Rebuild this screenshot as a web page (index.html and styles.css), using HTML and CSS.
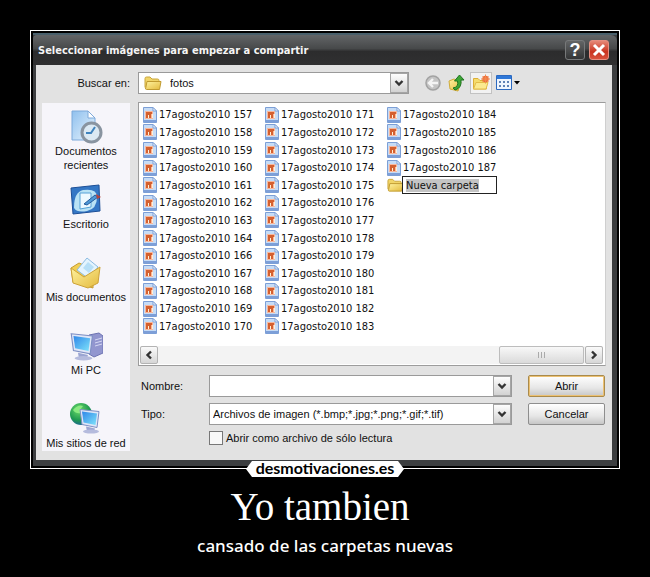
FILE: index.html
```html
<!DOCTYPE html>
<html lang="es">
<head>
<meta charset="utf-8">
<title>Yo tambien</title>
<link rel="stylesheet" href="styles.css">
</head>
<body>

<!-- Shared icons -->
<svg class="sprite" width="0" height="0" aria-hidden="true">
  <defs>
    <linearGradient id="gFolder" x1="0" y1="0" x2="1" y2="1">
      <stop offset="0" stop-color="#fff3a0"/><stop offset="1" stop-color="#e3b93c"/>
    </linearGradient>
    <linearGradient id="gScreen" x1="0" y1="0" x2="1" y2="1">
      <stop offset="0" stop-color="#2f86e8"/><stop offset="1" stop-color="#7fe4fb"/>
    </linearGradient>
    <linearGradient id="gPage" x1="0" y1="0" x2="1" y2="1">
      <stop offset="0" stop-color="#8fc0ee"/><stop offset="1" stop-color="#e8f4fd"/>
    </linearGradient>
    <radialGradient id="gGlobe" cx="0.4" cy="0.3" r="0.8">
      <stop offset="0" stop-color="#6fdc6a"/><stop offset="0.6" stop-color="#1f9a50"/><stop offset="1" stop-color="#1c55a8"/>
    </radialGradient>
  </defs>
  <symbol id="folder" viewBox="0 0 18 16">
    <path d="M1 12.500V3.500Q1 2 2.500 2H6L8 4H13.500Q15 4 15 5.500V7" fill="#f1d568" stroke="#c9a63c"/>
    <path d="M1.500 14L3 6.500H17L15.500 14.500H2.500Z" fill="url(#gFolder)" stroke="#c09a30"/>
  </symbol>
  <symbol id="image" viewBox="0 0 14 16">
    <path d="M.5.500H10L13.500 4V15.500H.5Z" fill="#c6dcf6" stroke="#7c9fd6"/>
    <path d="M10 .5V4H13.500Z" fill="#fff" stroke="#7c9fd6"/>
    <path d="M2 4H10V12H2Z" fill="#f7b79c"/>
    <path d="M3 5H9V7H8V11H6V8H5V11H3Z" fill="#d4602f"/>
    <path d="M5 8H6V11H5ZM9 7H10V11H9Z" fill="#fff0d8"/>
    <path d="M1 14H13" stroke="#7d9fd8" stroke-width="2"/>
  </symbol>
  <symbol id="chevron" viewBox="0 0 10 8">
    <path d="M1.500 2L5 5.500L8.500 2" fill="none" stroke="#333" stroke-width="2.400"/>
  </symbol>
  <symbol id="monitor" viewBox="0 0 26 26">
    <path d="M8 19L17 21L16 24L9 24Z" fill="#9ba5d2"/>
    <ellipse cx="13" cy="24" rx="8" ry="2" fill="#b5bbdd"/>
    <path d="M2 2L21 4L19 20L4 17Z" fill="#dfe6f7" stroke="#7e8fc4"/>
    <path d="M4 4L19 6L17.500 17.500L5.500 15Z" fill="url(#gScreen)"/>
  </symbol>
</svg>

<main class="poster">
  <div class="frame">
    <section class="dialog">
      <header class="titlebar">
        <h2 class="titlebar-text">Seleccionar imágenes para empezar a compartir</h2>
        <button class="title-btn" aria-label="Ayuda">?</button>
        <button class="title-btn close" aria-label="Cerrar">
          <svg width="14" height="14" viewBox="0 0 14 14"><path d="M2 2L12 12M12 2L2 12" stroke="#fff" stroke-width="3"/></svg>
        </button>
      </header>

      <div class="content">
        <div class="lookin">
          <label class="lookin-label" for="lookin">Buscar en:</label>
          <div class="combo combo-folder">
            <svg class="combo-icon" width="18" height="16"><use href="#folder"/></svg>
            <select id="lookin"><option>fotos</option></select>
            <span class="combo-arrow"><svg width="10" height="8"><use href="#chevron"/></svg></span>
          </div>
          <div class="tools">
            <button class="tool" aria-label="Atrás">
              <svg width="18" height="18" viewBox="0 0 18 18"><circle cx="9" cy="9" r="7" fill="#c4c4c4" stroke="#a2a2a2" stroke-width="1.500"/><path d="M14 9H6M9 5L5 9L9 13" fill="none" stroke="#f4f4f4" stroke-width="2.400"/></svg>
            </button>
            <button class="tool" aria-label="Subir un nivel">
              <svg width="18" height="18" viewBox="0 0 18 18"><path d="M1 7L6 5L13 8L10 17L2 15Z" fill="url(#gFolder)" stroke="#cfab3a"/><path d="M5 14Q11 13 9.500 7H6.500L11.500 1L16 6H13Q14 14 7 16Z" fill="#3da536" stroke="#1f7420"/></svg>
            </button>
            <button class="tool hot" aria-label="Crear nueva carpeta">
              <svg width="18" height="18" viewBox="0 0 18 18"><path d="M1.500 15V4.500H6L8 6.500H14.500V15Z" fill="#f5dc6c" stroke="#dcae37"/><path d="M1.500 15L4 8.500H16L14 15Z" fill="#fbea8f" stroke="#e3bc49"/><circle cx="13.500" cy="5" r="3.200" fill="#ef6a3a"/><path d="M13.500 0.500V9.500M9 5H18M10.500 2L16.500 8M16.500 2L10.500 8" stroke="#f08a50"/></svg>
            </button>
            <button class="tool wide" aria-label="Ver">
              <svg width="24" height="18" viewBox="0 0 24 18"><path d="M.5 1.500H15.500V15.500H.5Z" fill="#eef5fe" stroke="#2b69c0"/><path d="M1 2H15V5H1Z" fill="#2f78d8"/><path d="M3 7H5V9H3ZM7 7H9V9H7ZM11 7H13V9H11ZM3 11H5V13H3ZM7 11H9V13H7ZM11 11H13V13H11Z" fill="#5e82b6"/><path d="M18 7H24L21 10.500Z" fill="#000"/></svg>
            </button>
          </div>
        </div>

        <div class="columns">
          <nav class="places">
            <a class="place" href="#">
              <svg width="34" height="34" viewBox="0 0 34 34"><path d="M3 1H19L26 8V30H3Z" fill="url(#gPage)" stroke="#7da9da"/><path d="M19 1V8H26Z" fill="#fff" stroke="#7da9da"/><circle cx="22.500" cy="22.500" r="9.500" fill="#dbe9f3" stroke="#8994a0" stroke-width="3"/><path d="M26 17L22 23H17" fill="none" stroke="#3f83bd" stroke-width="2"/></svg>
              <span>Documentos recientes</span>
            </a>
            <a class="place" href="#">
              <svg width="34" height="34" viewBox="0 0 34 34"><path d="M2 5L30 2L31 28L4 31Z" fill="#3477c5" stroke="#1d4f97"/><path d="M5 25Q5 9 14 7Q28 5 28 14Q28 26 18 28Q8 30 5 25Z" fill="#b9e2f5"/><path d="M11 10H22V24L11 26Z" fill="#eef9ff" stroke="#57a2d7"/><path d="M15 21L26 12L29 14L18 22Z" fill="#4d97d6" stroke="#265c9d"/><path d="M27 11L32 14L28 16Z" fill="#b2433e"/></svg>
              <span>Escritorio</span>
            </a>
            <a class="place" href="#">
              <svg width="34" height="34" viewBox="0 0 34 34"><path d="M2 12L10 7L24 13L24 32L4 26Z" fill="#f1ce55" stroke="#c69c31"/><path d="M8 14L18 2L29 11L20 23Z" fill="#e4f4fe" stroke="#8bbbe2"/><path d="M14 12L19 6L25 11L20 17Z" fill="#b6dff7"/><path d="M2 12L15 21L31 11L29 27L19 32L4 27Z" fill="url(#gFolder)" stroke="#cda339"/></svg>
              <span>Mis documentos</span>
            </a>
            <a class="place" href="#">
              <svg width="34" height="34" viewBox="0 0 34 34"><path d="M20 6L30 4L34 7V24L25 28L20 25Z" fill="#9296cf" stroke="#6e74b2"/><path d="M26 11L33 9M26 14L33 12M26 17L33 15" stroke="#d5d8f3"/><use href="#monitor" x="0" y="2" width="29" height="30"/></svg>
              <span>Mi PC</span>
            </a>
            <a class="place" href="#">
              <svg width="34" height="34" viewBox="0 0 34 34"><circle cx="12" cy="12" r="11" fill="url(#gGlobe)"/><path d="M4 8Q9 2 14 4Q10 8 12 11Q7 12 4 8Z" fill="#8aea80"/><use href="#monitor" x="9" y="3" width="26" height="31"/></svg>
              <span>Mis sitios de red</span>
            </a>
          </nav>

          <div class="main">
            <div class="listbox">
              <ul class="files" id="files"></ul>
              <div class="scrollbar">
                <button class="scroll-btn" aria-label="Izquierda"><svg class="left" width="10" height="8"><use href="#chevron"/></svg></button>
                <div class="scroll-thumb"><i></i><i></i><i></i></div>
                <button class="scroll-btn" aria-label="Derecha"><svg class="right" width="10" height="8"><use href="#chevron"/></svg></button>
              </div>
            </div>

            <form class="fields">
              <label for="name">Nombre:</label>
              <div class="combo">
                <input id="name" type="text">
                <span class="combo-arrow"><svg width="10" height="8"><use href="#chevron"/></svg></span>
              </div>
              <button class="btn default" type="button">Abrir</button>

              <label for="type">Tipo:</label>
              <div class="combo">
                <select id="type"><option>Archivos de imagen (*.bmp;*.jpg;*.png;*.gif;*.tif)</option></select>
                <span class="combo-arrow"><svg width="10" height="8"><use href="#chevron"/></svg></span>
              </div>
              <button class="btn" type="button">Cancelar</button>

              <div class="readonly">
                <input id="readonly" type="checkbox">
                <label for="readonly">Abrir como archivo de sólo lectura</label>
              </div>
            </form>
          </div>
        </div>
      </div>
    </section>
    <a class="brand" href="#">desmotivaciones.es</a>
  </div>

  <h1 class="title">Yo tambien</h1>
  <p class="subtitle">cansado de las carpetas nuevas</p>
</main>

<script src="script.js"></script>
</body>
</html>
```

FILE: styles.css
```css
* {
  box-sizing: border-box;
}

body {
  margin: 0;
  background: #000;
  color: #111;
  font-family: "Liberation Sans", Arial, sans-serif;
  font-size: 11px;
}

button, input, select {
  font: inherit;
  color: inherit;
  margin: 0;
  padding: 0;
}

svg {
  display: block;
  flex: none;
}

.sprite {
  position: absolute;
}

.poster {
  padding: 30px 30px 0;
}

.frame {
  position: relative;
  border: 1px solid #fff;
  padding: 2px;
}

/* Dialog window */
.dialog {
  background: #3c3e40;
  padding: 0 5px 6px 3px;
  border-top: 2px solid #49606c;
}

.titlebar {
  display: flex;
  align-items: center;
  gap: 4px;
  height: 30px;
  margin: 0 -5px 0 -3px;
  padding: 0 8px 0 3px;
  background: linear-gradient(#636567, #47494a 45%, #2c2c2d 55%, #303031);
  border-radius: 4px 6px 0 0;
}

.titlebar-text {
  flex: 1;
  margin: 0;
  padding-left: 2px;
  color: #f4f4f4;
  font-family: "DejaVu Sans Condensed", "DejaVu Sans", sans-serif;
  font-size: 11px;
  font-weight: bold;
}

.title-btn {
  display: flex;
  align-items: center;
  justify-content: center;
  width: 20px;
  height: 20px;
  border: 1px solid #77797a;
  border-radius: 3px;
  background: linear-gradient(#636566, #343536);
  color: #fff;
  font-size: 18px;
  font-weight: bold;
  line-height: 18px;
}

.title-btn.close {
  border-color: #e68e80;
  background: linear-gradient(#e58877, #c9331f 60%, #d9523d);
}

.content {
  padding: 7px 6px 9px;
  background: #e2e2e2;
}

/* Look in row */
.lookin {
  display: flex;
  align-items: center;
  height: 22px;
}

.lookin-label {
  width: 96px;
  padding-right: 8px;
  text-align: right;
}

.combo {
  position: relative;
  display: flex;
  align-items: center;
  height: 22px;
  border: 1px solid #9a9a9a;
  background: #fff;
}

.combo-folder {
  flex: 0 1 271px;
  padding-left: 5px;
}

.combo select,
.combo input {
  flex: 1;
  min-width: 0;
  height: 20px;
  padding: 0 20px 0 3px;
  border: 0;
  outline: 0;
  background: none;
  appearance: none;
}

.combo-folder select {
  padding-left: 8px;
}

.combo-arrow {
  position: absolute;
  top: 0;
  right: 0;
  bottom: 0;
  display: flex;
  align-items: center;
  justify-content: center;
  width: 18px;
  border: 1px solid #a5a5a5;
  background: linear-gradient(#fdfdfd, #d2d2d2);
  pointer-events: none;
}

.tools {
  display: flex;
  align-items: center;
  gap: 2px;
  padding-left: 13px;
}

.tool {
  display: flex;
  align-items: center;
  justify-content: center;
  width: 22px;
  height: 22px;
  border: 1px solid transparent;
  background: none;
}

.tool.hot {
  border-color: #c2c2c2;
  background: #f2f2f2;
}

.tool.wide {
  width: 28px;
}

.columns {
  display: flex;
  gap: 8px;
  padding-top: 8px;
}

/* Places bar */
.places {
  width: 88px;
  margin-top: 1px;
  padding: 7px 0 1px;
  background: #f6f5fa;
}

.place {
  display: flex;
  flex-direction: column;
  align-items: center;
  min-height: 73px;
  color: #111;
  line-height: 14px;
  text-align: center;
  text-decoration: none;
}

.place:last-child {
  min-height: 0;
}

.main {
  flex: 1;
  min-width: 0;
}

/* File list */
.listbox {
  border: 1px solid #9c9c9c;
  border-right-color: #cfcfcf;
  background: #fff;
}

.files {
  display: grid;
  grid-auto-flow: column;
  grid-template-rows: repeat(13, 1fr);
  grid-auto-columns: 122px;
  height: 232px;
  margin: 0;
  padding: 3px 0 0 4px;
  list-style: none;
  font-family: "DejaVu Sans Condensed", "DejaVu Sans", sans-serif;
}

.file {
  display: flex;
  align-items: center;
  gap: 2px;
  min-height: 0;
  white-space: nowrap;
}

.file.folder {
  gap: 0;
}

.rename {
  width: 95px;
  height: 18px;
  padding: 0 3px;
  border: 1px solid #222;
  outline: 0;
  background: #fff;
  margin-left: -2px;
}

.rename::selection {
  background: #c4c4c4;
  color: #111;
}

.scrollbar {
  display: flex;
  justify-content: space-between;
  gap: 1px;
  height: 18px;
  margin: 11px 2px 1px 1px;
  background: #f3f3f3;
}

.scroll-btn {
  display: flex;
  align-items: center;
  justify-content: center;
  width: 18px;
  border: 1px solid #b3b3b3;
  border-radius: 2px;
  background: linear-gradient(#fafafa, #d6d6d6);
}

.scroll-btn .left {
  transform: rotate(90deg);
}

.scroll-btn .right {
  transform: rotate(-90deg);
}

.scroll-thumb {
  display: flex;
  align-items: center;
  justify-content: center;
  gap: 2px;
  width: 85px;
  margin-left: auto;
  border: 1px solid #bdbdbd;
  border-radius: 2px;
  background: linear-gradient(#f8f8f8, #dadada);
}

.scroll-thumb i {
  width: 1px;
  height: 6px;
  background: #aaa;
}

/* Name, type and buttons */
.fields {
  display: grid;
  grid-template-columns: 71px 1fr 77px;
  row-gap: 6px;
  align-items: center;
  padding: 9px 1px 0 0;
}

.fields > label {
  padding-left: 3px;
}

.fields .combo {
  margin-right: 16px;
}

.btn {
  height: 22px;
  border: 1px solid #8e8e8e;
  border-radius: 2px;
  background: linear-gradient(#fff, #e6e6e6 60%, #c6c6c6);
}

.btn.default {
  border-color: #a98a4c;
  box-shadow: inset 0 0 0 1px #ecc172;
}

.readonly {
  grid-column: 2 / 4;
  display: flex;
  align-items: center;
  gap: 3px;
}

.readonly input {
  width: 14px;
  height: 14px;
  border: 1px solid #777;
  background: #f8f8f8;
  appearance: none;
}

/* Site badge over the bottom edge of the frame */
.brand {
  position: absolute;
  bottom: -9px;
  left: 50%;
  transform: translateX(-50%);
  width: 158px;
  height: 16px;
  background: #fff;
  clip-path: polygon(6px 0, 152px 0, 100% 50%, 152px 100%, 6px 100%, 0 50%);
  color: #000;
  font-family: Lato, sans-serif;
  font-size: 16px;
  font-weight: bold;
  line-height: 14px;
  text-align: center;
  text-decoration: none;
}

.title {
  margin: 15px 10px 0 0;
  color: #fff;
  font-family: "Liberation Serif", "Times New Roman", serif;
  font-size: 39px;
  font-weight: normal;
  line-height: 46px;
  text-align: center;
}

.subtitle {
  margin: 4px 0 0;
  color: #fff;
  font-family: "Noto Sans", sans-serif;
  font-size: 17px;
  font-weight: 500;
  line-height: 24px;
  text-align: center;
}
```

FILE: script.js
```js
const files = document.getElementById('files');

// 165 was deleted
for (let n = 157; n <= 187; n++) {
  if (n === 165) continue;
  const li = document.createElement('li');
  li.className = 'file';
  li.innerHTML = `<svg width="14" height="16"><use href="#image"/></svg><span>17agosto2010 ${n}</span>`;
  files.appendChild(li);
}

// New folder, name still being edited
const folder = document.createElement('li');
folder.className = 'file folder';
folder.innerHTML = '<svg width="17" height="16"><use href="#folder"/></svg><input class="rename" type="text" aria-label="Nombre de la carpeta" value="Nueva carpeta">';
files.appendChild(folder);

const rename = folder.querySelector('.rename');
rename.focus();
rename.select();
```
